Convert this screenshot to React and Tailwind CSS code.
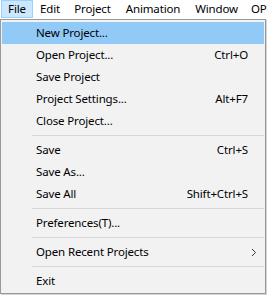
import React from 'react';

const menus = [
    { label: 'File', w: 'w-[32px]', active: true },
    { label: 'Edit', w: 'w-[34px]' },
    { label: 'Project', w: 'w-[51px]' },
    { label: 'Animation', w: 'w-[70px]' },
    { label: 'Window', w: 'w-[57px]' },
];

const items = [
    { label: 'New Project...', hover: true },
    { label: 'Open Project...', key: 'Ctrl+O' },
    { label: 'Save Project' },
    { label: 'Project Settings...', key: 'Alt+F7' },
    { label: 'Close Project...' },
    { sep: true },
    { label: 'Save', key: 'Ctrl+S' },
    { label: 'Save As...' },
    { label: 'Save All', key: 'Shift+Ctrl+S' },
    { sep: true },
    { label: 'Preferences(T)...' },
    { sep: true },
    { label: 'Open Recent Projects', sub: true },
    { sep: true },
    { label: 'Exit' },
];

export default function App() {
    return (
        <div className="w-[268px] h-[295px] overflow-hidden bg-white text-[11.5px] tracking-[-0.15px] text-black font-['Segoe_UI','Noto_Sans',sans-serif] leading-none">
            {/* Menu bar */}
            <div className="flex h-[19px] pl-[1px] whitespace-nowrap">
                {menus.map((m) => (
                    <div
                        key={m.label}
                        className={`${m.w} h-[18px] flex items-center justify-center shrink-0 ${
                            m.active ? 'bg-[#cce8ff] border border-[#99d1ff]' : ''
                        }`}
                    >
                        {m.label}
                    </div>
                ))}
                <div className="h-[18px] flex items-center pl-[6px] shrink-0">OP</div>
            </div>

            {/* Dropdown */}
            <div className="w-[266px] border border-[#999999] bg-[#f2f2f2] pt-[2px] pb-[1px] px-[1px] shadow-[1px_1px_0_#d4d4d4]">
                {items.map((it, i) =>
                    it.sep ? (
                        <div key={i} className="h-[7px] flex items-center pl-[30px]">
                            <div className="h-px w-full bg-[#d7d7d7]" />
                        </div>
                    ) : (
                        <div
                            key={i}
                            className={`h-[22px] flex items-center pl-[34px] pr-[16px] ${
                                it.hover ? 'bg-[#91c9f7]' : ''
                            }`}
                        >
                            <span>{it.label}</span>
                            {it.key && <span className="ml-auto">{it.key}</span>}
                            {it.sub && (
                                <svg className="ml-auto mr-[-9px]" width="6" height="9" viewBox="0 0 6 9">
                                    <path d="M1 1 L4.5 4.5 L1 8" fill="none" stroke="#333" strokeWidth="1" />
                                </svg>
                            )}
                        </div>
                    )
                )}
            </div>
        </div>
    );
}
